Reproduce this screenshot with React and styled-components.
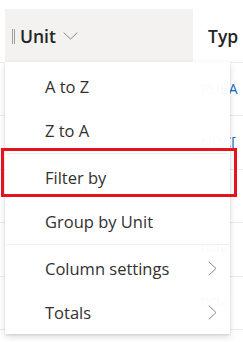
import React from "react";
import styled, { createGlobalStyle } from "styled-components";

const Global = createGlobalStyle`
  html, body { margin: 0; padding: 0; background: #ffffff; }
  body { font-family: "Segoe UI", "Open Sans", "Noto Sans", sans-serif; overflow: hidden; }
  * { box-sizing: border-box; }
`;

const Page = styled.div`
  position: relative;
  width: 243px;
  height: 342px;
  padding-top: 9px;
  overflow: hidden;
`;

const HeaderRow = styled.div`
  display: flex;
  height: 54px;
  border-bottom: 1px solid #edebe9;
`;

const HeaderCell = styled.div`
  display: flex;
  align-items: center;
  height: 53px;
  flex: none;
  width: ${(p) => p.$width}px;
  margin-left: ${(p) => p.$ml || 0}px;
  padding-left: ${(p) => p.$pl}px;
  background: ${(p) => (p.$active ? "#f3f2f1" : "transparent")};
  font-size: 17.5px;
  font-weight: 600;
  color: #242424;
  white-space: nowrap;
  overflow: hidden;
`;

const Grip = styled.span`
  display: inline-block;
  width: 3px;
  height: 15px;
  border-left: 1px solid #a19f9d;
  border-right: 1px solid #a19f9d;
  margin-right: 5px;
  margin-top: 1px;
`;

const HeaderLabel = styled.span`
  margin-right: 7px;
`;

const BodyRow = styled.div`
  display: flex;
  height: 53.4px;
  border-bottom: 1px solid #edebe9;
`;

const Cell = styled.div`
  flex: none;
  width: ${(p) => p.$width}px;
  padding-left: ${(p) => p.$pl || 0}px;
  padding-top: ${(p) => p.$pt || 16}px;
  font-size: 14px;
  color: ${(p) => p.$color || "#0f6cbd"};
  white-space: nowrap;
`;

const Dot = styled.span`
  display: inline-block;
  width: 4px;
  height: 5px;
  border-radius: 50%;
  background: ${(p) => p.$c};
  margin-left: 1px;
`;

const Menu = styled.div`
  position: absolute;
  top: 62px;
  left: 5px;
  width: 225px;
  padding-top: 2px;
  background: rgba(255, 255, 255, 0.97);
  box-shadow: 0 3.2px 7.2px rgba(0, 0, 0, 0.13), 0 0.6px 1.8px rgba(0, 0, 0, 0.11);
  display: flex;
  flex-direction: column;
`;

const Item = styled.div`
  display: flex;
  align-items: center;
  justify-content: space-between;
  height: 44px;
  padding-left: 40px;
  padding-right: 13px;
  font-size: 16.5px;
  color: #323130;
  white-space: nowrap;
`;

const Divider = styled.div`
  height: 1px;
  margin: 1px 0;
  background: #f0efee;
`;

const Highlight = styled.div`
  position: absolute;
  left: 1px;
  top: 148px;
  width: 236px;
  height: 49px;
  border: 3px solid #e3141e;
  pointer-events: none;
`;

const ChevronDown = () => (
  <svg width="15" height="8" viewBox="0 0 15 8" fill="none">
    <path d="M0.7 0.7 L7.5 7 L14.3 0.7" stroke="#8a8886" strokeWidth="1" />
  </svg>
);

const ChevronRight = () => (
  <svg width="9" height="15" viewBox="0 0 9 15" fill="none">
    <path d="M0.8 0.7 L8 7.5 L0.8 14.3" stroke="#8a8886" strokeWidth="1" />
  </svg>
);

const rows = [
  { text: "PUBA" },
  { text: "NOC[" },
  { text: "" },
  { text: "ncl", dot: "#c27c2c" },
  { text: "ncl", dot: "#c27c2c" },
];

const menuItems = [
  { label: "A to Z" },
  { label: "Z to A" },
  { divider: true },
  { label: "Filter by" },
  { label: "Group by Unit" },
  { divider: true },
  { label: "Column settings", sub: true },
  { label: "Totals", sub: true },
];

export default function App() {
  return (
    <>
      <Global />
      <Page>
        <HeaderRow>
          <HeaderCell $width={188} $ml={5} $pl={7} $active>
            <Grip />
            <HeaderLabel>Unit</HeaderLabel>
            <ChevronDown />
          </HeaderCell>
          <HeaderCell $width={50} $pl={15}>
            Typ
          </HeaderCell>
        </HeaderRow>
        {rows.map((r, i) => (
          <BodyRow key={i}>
            <Cell $width={193} />
            <Cell $width={50} $pl={8} $pt={r.dot ? 14 : 16}>
              {r.text}
              {r.dot && <Dot $c={r.dot} />}
            </Cell>
          </BodyRow>
        ))}
        <Menu>
          {menuItems.map((m, i) =>
            m.divider ? (
              <Divider key={i} />
            ) : (
              <Item key={i}>
                <span>{m.label}</span>
                {m.sub && <ChevronRight />}
              </Item>
            )
          )}
        </Menu>
        <Highlight />
      </Page>
    </>
  );
}
